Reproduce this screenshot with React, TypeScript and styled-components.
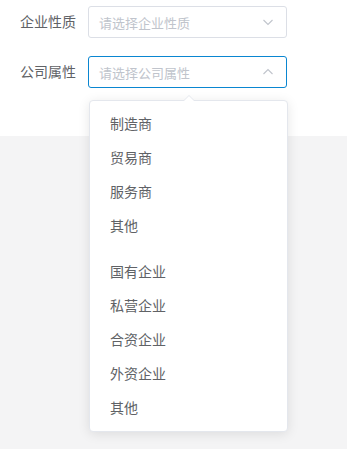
import React from "react";
import styled, { createGlobalStyle } from "styled-components";

const Global = createGlobalStyle`
  html, body { margin: 0; padding: 0; background: #f4f4f5; }
  body { font-family: "Liberation Sans", "Noto Sans CJK SC", sans-serif; }
  #root { min-height: 449px; }
`;

const Page = styled.div`
  width: 347px;
  min-height: 449px;
  background: #f4f4f5;
  position: relative;
`;

const FormPanel = styled.div`
  background: #fff;
  height: 136px;
  box-sizing: border-box;
  padding-top: 6px;
  display: flex;
  flex-direction: column;
  gap: 18px;
`;

const Row = styled.div`
  display: flex;
  align-items: center;
  position: relative;
`;

const Label = styled.label`
  width: 88px;
  box-sizing: border-box;
  padding-right: 12px;
  text-align: right;
  font-size: 14px;
  color: #606266;
  line-height: 32px;
`;

const SelectBox = styled.div<{ $active?: boolean }>`
  width: 199px;
  height: 32px;
  box-sizing: border-box;
  border: 1px solid ${(p) => (p.$active ? "#0a86d1" : "#dcdfe6")};
  border-radius: 3px;
  display: flex;
  align-items: center;
  justify-content: space-between;
  padding: 0 12px 0 10px;
  background: #fff;
`;

const Placeholder = styled.span`
  font-size: 13px;
  color: #c0c4cc;
`;

const Chevron = ({ up }: { up?: boolean }) => (
  <svg width="12" height="8" viewBox="0 0 12 8">
    <path
      d={up ? "M1.5 6 L6 1.5 L10.5 6" : "M1.5 2 L6 6.5 L10.5 2"}
      fill="none"
      stroke="#c0c4cc"
      strokeWidth="1.1"
    />
  </svg>
);

const Dropdown = styled.div`
  position: absolute;
  top: 100px;
  left: 89px;
  width: 199px;
  box-sizing: border-box;
  background: #fff;
  border: 1px solid #e4e7ed;
  border-radius: 4px;
  box-shadow: 0 2px 12px 0 rgba(0, 0, 0, 0.1);
  padding: 6px 0;
`;

const Arrow = styled.div`
  position: absolute;
  top: -6px;
  left: 93px;
  width: 0;
  height: 0;
  border-left: 6px solid transparent;
  border-right: 6px solid transparent;
  border-bottom: 6px solid #e4e7ed;
  &::after {
    content: "";
    position: absolute;
    top: 1px;
    left: -6px;
    border-left: 6px solid transparent;
    border-right: 6px solid transparent;
    border-bottom: 6px solid #fff;
  }
`;

const Group = styled.ul<{ $gap?: boolean }>`
  list-style: none;
  margin: 0;
  padding: 0;
  padding-top: ${(p) => (p.$gap ? "12px" : "0")};
`;

const Item = styled.li`
  height: 34px;
  line-height: 34px;
  padding: 0 20px;
  font-size: 14px;
  color: #606266;
`;

const groupA = ["制造商", "贸易商", "服务商", "其他"];
const groupB = ["国有企业", "私营企业", "合资企业", "外资企业", "其他"];

export default function App() {
  return (
    <Page>
      <Global />
      <FormPanel>
        <Row>
          <Label>企业性质</Label>
          <SelectBox>
            <Placeholder>请选择企业性质</Placeholder>
            <Chevron />
          </SelectBox>
        </Row>
        <Row>
          <Label>公司属性</Label>
          <SelectBox $active>
            <Placeholder>请选择公司属性</Placeholder>
            <Chevron up />
          </SelectBox>
        </Row>
      </FormPanel>
      <Dropdown>
        <Arrow />
        <Group>
          {groupA.map((t, i) => (
            <Item key={i}>{t}</Item>
          ))}
        </Group>
        <Group $gap>
          {groupB.map((t, i) => (
            <Item key={i}>{t}</Item>
          ))}
        </Group>
      </Dropdown>
    </Page>
  );
}
